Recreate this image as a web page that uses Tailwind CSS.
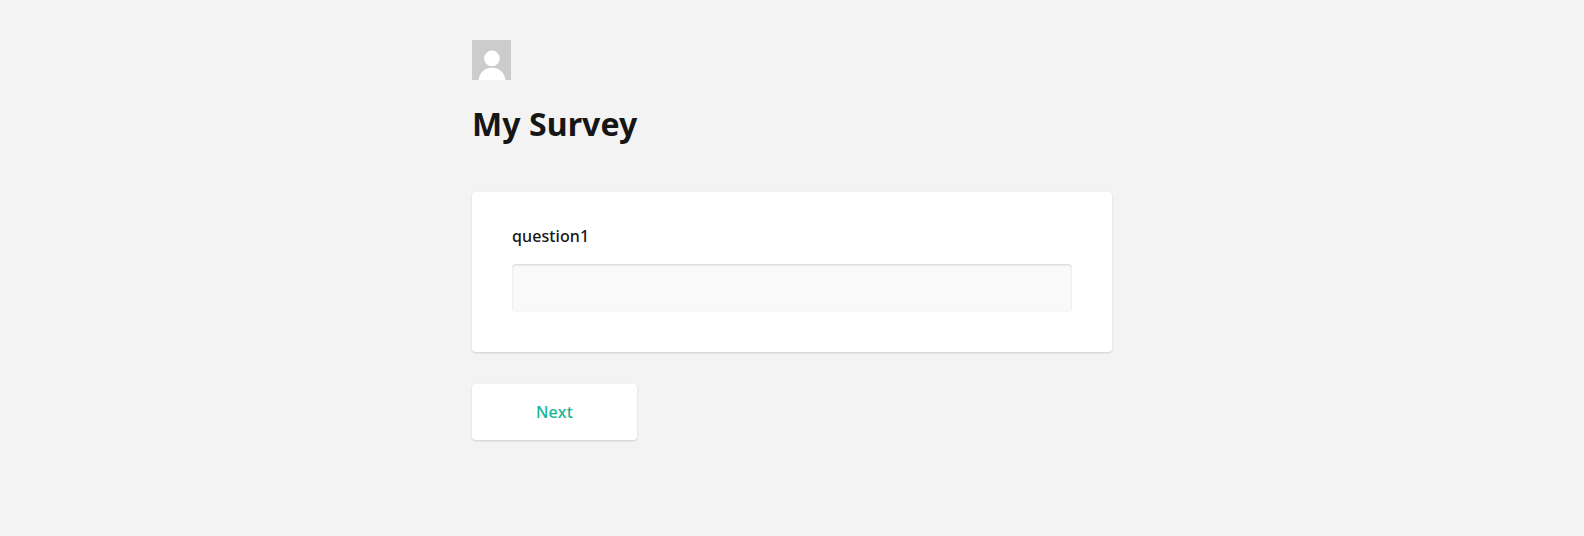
<!DOCTYPE html>
<html lang="en"><head><meta charset="utf-8"><title>My Survey</title>
<script src="https://cdn.jsdelivr.net/npm/@tailwindcss/browser@4"></script></head>
<body class="bg-[#f3f3f3] h-[536px] overflow-hidden text-[#161616] font-['Noto_Sans',sans-serif]">
<main class="w-[640px] mx-auto pt-10">
<svg class="block w-[39px] h-10" viewBox="0 0 39 40"><rect width="39" height="40" fill="#ccc"/><circle cx="19.9" cy="18.4" r="7.8" fill="#fff"/><path d="M6.6 40C7.6 32 13 27.7 20 27.7S32.4 32 33.4 40z" fill="#fff"/></svg>
<h1 class="mt-6 text-[32px] leading-[40px] font-bold tracking-[0.1px]">My Survey</h1>
<section class="mt-12 h-40 rounded bg-white shadow-[0_1px_2px_rgba(0,0,0,0.15)] px-10 pt-8">
<label for="q" class="block text-base leading-6 font-medium tracking-[0.1px]">question1</label>
<input id="q" class="block mt-4 h-12 w-full rounded bg-[#f9f9f9] px-4 outline-none shadow-[inset_0_1px_2px_rgba(0,0,0,0.15)]">
</section>
<button class="mt-8 h-14 w-[165px] rounded bg-white shadow-[0_1px_2px_rgba(0,0,0,0.15)] text-base font-medium tracking-[0.25px] text-[#19b394]">Next</button>
</main></body></html>
